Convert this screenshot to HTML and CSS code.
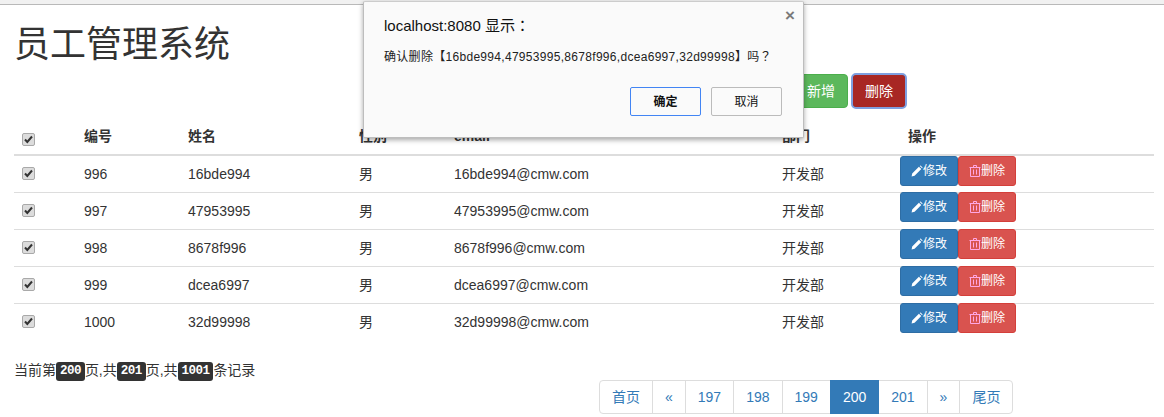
FILE: index.html
```html
<!DOCTYPE html>
<html lang="zh-CN">
<head>
<meta charset="utf-8">
<title>员工管理系统</title>
<link rel="stylesheet" href="styles.css">
</head>
<body>
<div class="browser-strip"></div>
<main class="page">
  <h1 class="title">员工管理系统</h1>
  <div class="actions">
    <button class="btn btn-add">新增</button>
    <button class="btn btn-del-all">删除</button>
  </div>
  <table class="emp-table">
    <colgroup>
      <col class="c-check"><col class="c-id"><col class="c-name"><col class="c-gender"><col class="c-email"><col class="c-dept"><col class="c-ops">
    </colgroup>
    <thead>
      <tr><th><input class="check" type="checkbox" checked></th><th>编号</th><th>姓名</th><th>性别</th><th>email</th><th>部门</th><th>操作</th></tr>
    </thead>
    <tbody>
      <tr><td><input class="check" type="checkbox" checked></td><td>996</td><td>16bde994</td><td>男</td><td>16bde994@cmw.com</td><td>开发部</td>
        <td class="ops"><button class="btn-sm edit"><svg class="ico" viewBox="0 0 12 12"><path d="M0.6 11.4l0.6-3L7.9 1.700l2.400 2.400-6.700 6.700zM8.700 0.900l0.900-0.500 2 2-0.500 0.900z"/></svg>修改</button><button class="btn-sm del"><svg class="ico trash" viewBox="0 0 12 12"><path d="M0.500 2.500h11M4.500 2.500V0.500h3v2M1.500 2.500v9h9v-9M4.500 4.500v5M7.500 4.500v5"/></svg>删除</button></td></tr>
      <tr><td><input class="check" type="checkbox" checked></td><td>997</td><td>47953995</td><td>男</td><td>47953995@cmw.com</td><td>开发部</td>
        <td class="ops"><button class="btn-sm edit"><svg class="ico" viewBox="0 0 12 12"><path d="M0.6 11.4l0.6-3L7.9 1.700l2.400 2.400-6.700 6.700zM8.700 0.900l0.900-0.500 2 2-0.500 0.900z"/></svg>修改</button><button class="btn-sm del"><svg class="ico trash" viewBox="0 0 12 12"><path d="M0.500 2.500h11M4.500 2.500V0.500h3v2M1.500 2.500v9h9v-9M4.500 4.500v5M7.500 4.500v5"/></svg>删除</button></td></tr>
      <tr><td><input class="check" type="checkbox" checked></td><td>998</td><td>8678f996</td><td>男</td><td>8678f996@cmw.com</td><td>开发部</td>
        <td class="ops"><button class="btn-sm edit"><svg class="ico" viewBox="0 0 12 12"><path d="M0.6 11.4l0.6-3L7.9 1.700l2.400 2.400-6.700 6.700zM8.700 0.900l0.900-0.500 2 2-0.500 0.900z"/></svg>修改</button><button class="btn-sm del"><svg class="ico trash" viewBox="0 0 12 12"><path d="M0.500 2.500h11M4.500 2.500V0.500h3v2M1.500 2.500v9h9v-9M4.500 4.500v5M7.500 4.500v5"/></svg>删除</button></td></tr>
      <tr><td><input class="check" type="checkbox" checked></td><td>999</td><td>dcea6997</td><td>男</td><td>dcea6997@cmw.com</td><td>开发部</td>
        <td class="ops"><button class="btn-sm edit"><svg class="ico" viewBox="0 0 12 12"><path d="M0.6 11.4l0.6-3L7.9 1.700l2.400 2.400-6.700 6.700zM8.700 0.900l0.900-0.500 2 2-0.500 0.900z"/></svg>修改</button><button class="btn-sm del"><svg class="ico trash" viewBox="0 0 12 12"><path d="M0.500 2.500h11M4.500 2.500V0.500h3v2M1.500 2.500v9h9v-9M4.500 4.500v5M7.500 4.500v5"/></svg>删除</button></td></tr>
      <tr><td><input class="check" type="checkbox" checked></td><td>1000</td><td>32d99998</td><td>男</td><td>32d99998@cmw.com</td><td>开发部</td>
        <td class="ops"><button class="btn-sm edit"><svg class="ico" viewBox="0 0 12 12"><path d="M0.6 11.4l0.6-3L7.9 1.700l2.400 2.400-6.700 6.700zM8.700 0.900l0.900-0.500 2 2-0.500 0.900z"/></svg>修改</button><button class="btn-sm del"><svg class="ico trash" viewBox="0 0 12 12"><path d="M0.500 2.500h11M4.500 2.500V0.500h3v2M1.500 2.500v9h9v-9M4.500 4.500v5M7.500 4.500v5"/></svg>删除</button></td></tr>
    </tbody>
  </table>
  <div class="footer-row">
    <p class="page-info">当前第<kbd>200</kbd>页,共<kbd>201</kbd>页,共<kbd>1001</kbd>条记录</p>
    <nav class="pager">
      <a class="pg">首页</a><a class="pg">«</a><a class="pg">197</a><a class="pg">198</a><a class="pg">199</a><a class="pg active">200</a><a class="pg">201</a><a class="pg">»</a><a class="pg">尾页</a>
    </nav>
  </div>
</main>
<div class="dialog" role="dialog">
  <span class="dialog-close">×</span>
  <div class="dialog-title" lang="zh-TW">localhost:8080 显示：</div>
  <div class="dialog-msg" lang="zh-TW">确认删除【16bde994,47953995,8678f996,dcea6997,32d99998】吗？</div>
  <div class="dialog-btns">
    <button class="dlg-btn primary">确定</button>
    <button class="dlg-btn">取消</button>
  </div>
</div>
</body>
</html>
```
FILE: styles.css
```css
* { box-sizing: border-box; }
html, body { margin: 0; padding: 0; height: 417px; overflow: hidden; background: #fff; }
body {
  font-family: "Liberation Sans", "Noto Sans CJK SC", sans-serif;
  font-size: 14px;
  line-height: 20px;
  color: #333;
}
.browser-strip { height: 5px; background: #f1f1f1; border-bottom: 1px solid #b9b9b9; }
.page { padding: 0 10px 0 14px; }
.title {
  margin: 20px 0 10px;
  font-size: 36px;
  font-weight: 400;
  line-height: 39px;
  color: #333;
}
.actions { display: flex; gap: 4px; padding-left: 780px; margin-bottom: 10px; }
.btn {
  width: 54px;
  height: 34px;
  padding: 6px 0;
  border: 1px solid transparent;
  border-radius: 4px;
  color: #fff;
  font: inherit;
}
.btn-add { background: #5cb85c; border-color: #4cae4c; }
.btn-del-all { background: #a82724; border-color: #761c19; outline: 2px solid #7f9fe0; outline-offset: -1px; }
.emp-table { width: 1140px; border-collapse: collapse; table-layout: fixed; }
.c-check { width: 62px; }
.c-id { width: 104px; }
.c-name { width: 171px; }
.c-gender { width: 95px; }
.c-email { width: 328px; }
.c-dept { width: 126px; }
.c-ops { width: 254px; }
.emp-table th {
  height: 37px;
  padding: 8px;
  text-align: left;
  font-weight: 700;
  vertical-align: bottom;
  border-bottom: 2px solid #ddd;
}
.emp-table td { height: 37px; padding: 8px; vertical-align: top; }
.emp-table tbody tr + tr td { border-top: 1px solid #ddd; }
.emp-table td.ops { padding: 0; font-size: 0; line-height: 0; }
.emp-table tbody tr + tr .btn-sm { margin-top: -1px; }
.check {
  appearance: none;
  display: block;
  width: 13px;
  height: 13px;
  margin: 3px 0 0;
  border: 1px solid #a9a9a9;
  border-radius: 2px;
  background: #dcdcdc url("data:image/svg+xml;utf8,<svg xmlns='http://www.w3.org/2000/svg' viewBox='0 0 11 11'><path d='M2 5.500l2.300 2.500L9 2.500' fill='none' stroke='%23333' stroke-width='2'/></svg>") center / 11px 11px no-repeat;
}
.emp-table th .check { margin: 6px 0 0; }
.btn-sm {
  display: inline-flex;
  align-items: center;
  justify-content: center;
  vertical-align: top;
  width: 58px;
  height: 30px;
  padding: 0;
  border: 1px solid transparent;
  border-radius: 3px;
  color: #fff;
  font: 12px/18px "Liberation Sans", "Noto Sans CJK SC", sans-serif;
}
.edit { background: #337ab7; border-color: #2e6da4; }
.del { background: #d9534f; border-color: #d43f3a; }
.ico { width: 12px; height: 12px; fill: #fff; flex: none; }
.trash { fill: none; stroke: #ffa6e4; stroke-width: 1; }
.footer-row { display: flex; margin-top: 20px; }
.page-info { flex: 0 0 585px; margin: 0; height: 20px; line-height: 19px; }
kbd {
  display: inline-block;
  padding: 0 4px;
  height: 19px;
  vertical-align: top;
  margin-top: 1px;
  background: #333;
  border-radius: 3px;
  color: #fff;
  font: 700 12.6px/19px "Liberation Mono", monospace;
  letter-spacing: -0.6px;
}
.pager { display: flex; margin-top: 19px; height: 34px; }
.pg {
  display: block;
  padding: 6px 12px;
  height: 34px;
  margin-left: -1px;
  border: 1px solid #ddd;
  background: #fff;
  color: #337ab7;
}
.pg:first-child { margin-left: 0; border-radius: 4px 0 0 4px; }
.pg:last-child { border-radius: 0 4px 4px 0; }
.pg.active { background: #337ab7; border-color: #337ab7; color: #fff; position: relative; }
.dialog {
  position: absolute;
  left: 363px;
  top: 1px;
  width: 441px;
  height: 137px;
  padding: 14px 21px 0 20px;
  background: #fafafa;
  border: 1px solid #bdbdbd;
  border-top-color: #ccc;
  border-radius: 2px;
  box-shadow: 0 2px 5px rgba(0, 0, 0, 0.35);
  color: #111;
}
.dialog-close {
  position: absolute;
  right: 8px;
  top: 3px;
  font: 700 17px/22px "Liberation Sans", sans-serif;
  color: #7a7a7a;
}
.dialog-title { font-family: "Liberation Sans", "Noto Sans CJK TC", sans-serif; font-size: 15px; line-height: 20px; }
.dialog-msg { font-family: "Liberation Sans", "Noto Sans CJK TC", sans-serif; margin-top: 12px; font-size: 12px; line-height: 18px; color: #222; white-space: nowrap; letter-spacing: 0.3px; }
.dialog-btns { display: flex; justify-content: flex-end; gap: 10px; margin-top: 21px; }
.dlg-btn {
  width: 71px;
  height: 29px;
  padding: 0;
  border: 1px solid #bbb;
  border-radius: 2px;
  background: #fafafa;
  color: #111;
  font: 12px/18px "Liberation Sans", "Noto Sans CJK SC", sans-serif;
}
.dlg-btn.primary { border-color: #4285f4; font-weight: 700; }
```
